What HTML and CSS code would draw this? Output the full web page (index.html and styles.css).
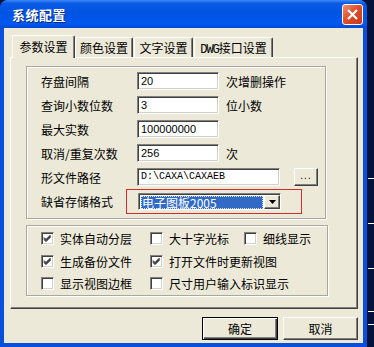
FILE: index.html
```html
<!DOCTYPE html>
<html lang="zh-CN">
<head>
    <meta charset="UTF-8">
    <title>系统配置</title>
    <link rel="stylesheet" href="styles.css">
</head>
<body>
    <div class="window">
        <div class="titlebar">
            <span class="title">系统配置</span>
            <span class="close">
                <svg width="13" height="13" viewBox="0 0 13 13"><path d="M2 2L11 11M11 2L2 11" stroke="#fff" stroke-width="2.2"/></svg>
            </span>
        </div>
        <div class="client">
            <div class="tabs">
                <div class="tab active">参数设置</div>
                <div class="tab t2">颜色设置</div>
                <div class="tab t3">文字设置</div>
                <div class="tab t4"><span class="mono">DWG</span>接口设置</div>
            </div>
            <div class="panel">
                <div class="group params">
                    <div class="row">
                        <span class="label">存盘间隔</span>
                        <span class="input">20</span>
                        <span class="unit">次增删操作</span>
                    </div>
                    <div class="row">
                        <span class="label">查询小数位数</span>
                        <span class="input">3</span>
                        <span class="unit">位小数</span>
                    </div>
                    <div class="row">
                        <span class="label">最大实数</span>
                        <span class="input">100000000</span>
                    </div>
                    <div class="row">
                        <span class="label">取消/重复次数</span>
                        <span class="input">256</span>
                        <span class="unit">次</span>
                    </div>
                    <div class="row">
                        <span class="label">形文件路径</span>
                        <span class="input path">D:\CAXA\CAXAEB</span>
                        <span class="btn dots">...</span>
                    </div>
                    <div class="row last">
                        <span class="label short">缺省存储格式</span>
                        <div class="mark">
                            <div class="combo">
                                <span class="combo-text"><span class="sel">电子图板2005</span></span>
                                <span class="drop">
                                    <svg width="7" height="4" viewBox="0 0 7 4"><path d="M0 0H7L3.5 4Z" fill="#000"/></svg>
                                </span>
                            </div>
                        </div>
                    </div>
                </div>
                <div class="group checks">
                    <label class="check"><span class="box on"></span>实体自动分层</label>
                    <label class="check"><span class="box"></span>大十字光标</label>
                    <label class="check"><span class="box"></span>细线显示</label>
                    <label class="check"><span class="box on"></span>生成备份文件</label>
                    <label class="check wide"><span class="box on"></span>打开文件时更新视图</label>
                    <label class="check"><span class="box"></span>显示视图边框</label>
                    <label class="check wide"><span class="box"></span>尺寸用户输入标识显示</label>
                </div>
            </div>
            <div class="buttons">
                <span class="btn push default">确定</span>
                <span class="btn push">取消</span>
            </div>
        </div>
    </div>
</body>
</html>
```

FILE: styles.css
```css
body {
    margin: 0;
    width: 374px;
    height: 347px;
    overflow: hidden;
    font-family: "Noto Sans CJK SC", "Liberation Sans", sans-serif;
    font-size: 12px;
    color: #000;
    background:
        linear-gradient(#fff, #fff) 368px 178px / 6px 1px no-repeat,
        linear-gradient(#fff, #fff) 368px 223px / 6px 1px no-repeat,
        linear-gradient(#fff, #fff) 368px 268px / 6px 1px no-repeat,
        linear-gradient(#fff, #fff) 368px 311px / 6px 1px no-repeat,
        linear-gradient(#fff, #fff) 368px 324px / 6px 1px no-repeat,
        #07123a;
}
.window {
    width: 367px;
    height: 347px;
    background: #0a4fdc;
    border-radius: 8px 8px 0 0;
    overflow: hidden;
}
.titlebar {
    height: 28px;
    display: flex;
    align-items: center;
    padding: 0 3px 0 12px;
    background: linear-gradient(#3c8cf8 0, #0a5ae6 12%, #0054e3 45%, #0058ee 85%, #0048d6 100%);
}
.title {
    flex: 1;
    color: #fff;
    font-weight: bold;
    font-size: 13px;
    letter-spacing: 0.5px;
    text-shadow: 1px 1px #0a2a80;
}
.close {
    width: 19px;
    height: 19px;
    border: 1px solid #fff;
    border-radius: 3px;
    background: linear-gradient(135deg, #f09070 0, #e0502a 45%, #c8361a 100%);
    display: flex;
    align-items: center;
    justify-content: center;
    margin-right: 1px;
}
.client {
    margin: 0 4px;
    height: 315px;
    background: #ece9d8;
    padding: 7px 3px 0 6px;
    box-sizing: border-box;
}
.tabs {
    display: flex;
    align-items: flex-start;
    margin-left: 2px;
    height: 22px;
}
.tab {
    height: 19px;
    margin-top: 2px;
    border: 1px solid #fff;
    border-bottom: none;
    border-right: 1px solid #404040;
    box-shadow: inset -1px 0 #808080;
    border-radius: 2px 2px 0 0;
    text-align: center;
    line-height: 19px;
    box-sizing: content-box;
}
.tab.active {
    width: 61px;
    height: 22px;
    margin-top: 0;
    line-height: 22px;
    background: #ece9d8;
    position: relative;
    z-index: 1;
}
.tab.t2 { width: 56px; margin-left: 0; }
.tab.t3 { width: 57px; margin-left: 1px; }
.tab.t4 { width: 77px; margin-left: 1px; }
.mono {
    font-family: "Liberation Mono", monospace;
    font-size: 12px;
    letter-spacing: -1px;
}
.panel {
    width: 348px;
    height: 252px;
    box-sizing: border-box;
    border: 1px solid #fff;
    border-right-color: #404040;
    border-bottom-color: #404040;
    box-shadow: inset -1px -1px #808080;
    padding: 8px 0 0 15px;
}
.group {
    border: 1px solid #aca899;
    box-shadow: 1px 1px 0 #fff, inset 1px 1px 0 #fff;
    box-sizing: border-box;
}
.params {
    width: 300px;
    height: 153px;
    padding: 2px 0 0 14px;
}
.row {
    display: flex;
    align-items: center;
    height: 24px;
}
.row.last {
    height: 25px;
}
.label {
    width: 96px;
    flex: none;
}
.label.short {
    width: 85px;
}
.input {
    width: 82px;
    height: 18px;
    box-sizing: border-box;
    background: #fff;
    border: 1px solid;
    border-color: #808080 #fff #fff #808080;
    box-shadow: inset 1px 1px #404040, inset -1px -1px #d4d0c8;
    font-family: "Liberation Sans", sans-serif;
    font-size: 11px;
    line-height: 16px;
    padding-left: 3px;
}
.input.path {
    width: 143px;
    font-family: "Liberation Mono", monospace;
    font-size: 10px;
}
.unit {
    margin-left: 7px;
}
.btn {
    background: #ece9d8;
    border: 1px solid;
    border-color: #fff #404040 #404040 #fff;
    box-shadow: inset -1px -1px #808080;
    box-sizing: border-box;
    display: flex;
    align-items: center;
    justify-content: center;
}
.dots {
    width: 24px;
    height: 18px;
    margin-left: 14px;
    font-family: "Liberation Sans", sans-serif;
    font-size: 10px;
    letter-spacing: 1px;
    padding-bottom: 3px;
}
.mark {
    border: 1px solid #d22c2c;
    height: 25px;
    box-sizing: border-box;
    padding: 3px 20px 0 11px;
}
.combo {
    width: 143px;
    height: 17px;
    box-sizing: border-box;
    background: #fff;
    border: 1px solid;
    border-color: #808080 #fff #fff #808080;
    box-shadow: inset 1px 1px #404040;
    display: flex;
    padding: 1px 0 0 1px;
}
.combo-text {
    flex: 1;
    padding: 1px;
}
.sel {
    display: block;
    height: 13px;
    background: #316ac5;
    color: #fff;
    outline: 1px dotted #e0e0e0;
    outline-offset: -1px;
    line-height: 13px;
    padding-left: 1px;
    font-size: 12px;
}
.drop {
    width: 16px;
    height: 14px;
    background: #ece9d8;
    border: 1px solid;
    border-color: #fff #404040 #404040 #fff;
    box-shadow: inset -1px -1px #808080;
    box-sizing: border-box;
    display: flex;
    align-items: center;
    justify-content: center;
}
.checks {
    width: 302px;
    height: 71px;
    margin-top: 6px;
    padding: 1px 0 0 14px;
    display: grid;
    grid-template-columns: 109px 94px 1fr;
    grid-template-rows: 23px 23px 21px;
}
.check {
    display: flex;
    align-items: center;
    white-space: nowrap;
}
.check.wide {
    grid-column: span 2;
}
.box {
    width: 13px;
    height: 13px;
    box-sizing: border-box;
    background: #fff;
    border: 1px solid;
    border-color: #808080 #fff #fff #808080;
    box-shadow: inset 1px 1px #404040, inset -1px -1px #d4d0c8;
    margin-right: 6px;
    flex: none;
}
.box.on {
    background: #fff url("data:image/svg+xml,%3Csvg xmlns='http://www.w3.org/2000/svg' width='11' height='11'%3E%3Cpath d='M2 4.5L4 6.5L8.5 2M2 5.5L4 7.5L8.5 3M2 6.5L4 8.5L8.5 4' stroke='%23000' fill='none'/%3E%3C/svg%3E") center / 11px 11px no-repeat;
}
.buttons {
    display: flex;
    justify-content: flex-end;
    gap: 5px;
    margin-top: 8px;
    width: 348px;
}
.push {
    width: 75px;
    height: 23px;
}
.push.default {
    width: 76px;
    border: 1px solid #000;
    box-shadow: inset 1px 1px #fff, inset -1px -1px #404040, inset -2px -2px #808080;
}
```
